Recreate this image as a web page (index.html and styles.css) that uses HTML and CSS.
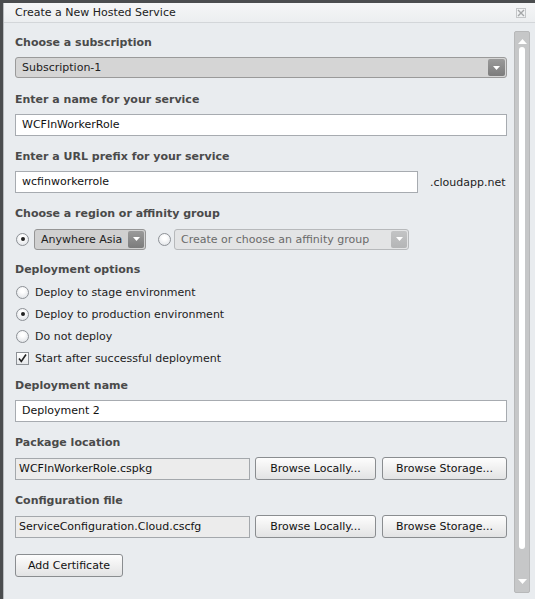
FILE: index.html
```html
<!DOCTYPE html>
<html>
<head>
<meta charset="utf-8">
<link rel="stylesheet" href="styles.css">
</head>
<body>
<div class="dialog">
  <div class="titlebar">
    <span class="title">Create a New Hosted Service</span>
    <svg class="close" width="10" height="10" viewBox="0 0 10 10">
      <rect x="0.5" y="0.5" width="9" height="9" fill="none" stroke="#c4c6c8"/>
      <path d="M2 2 L8 8 M8 2 L2 8" stroke="#a4a6a8" stroke-width="1.4"/>
    </svg>
  </div>
  <div class="content">
    <div class="form">
      <div class="label">Choose a subscription</div>
      <div class="select sub">
        <span class="sel-text">Subscription-1</span>
        <span class="dd"><svg width="7" height="4" viewBox="0 0 7 4"><path d="M0 0 H7 L3.5 4 Z" fill="#fff"/></svg></span>
      </div>

      <div class="label">Enter a name for your service</div>
      <div class="input">WCFInWorkerRole</div>

      <div class="label">Enter a URL prefix for your service</div>
      <div class="row url-row">
        <div class="input url">wcfinworkerrole</div>
        <span class="suffix">.cloudapp.net</span>
      </div>

      <div class="label">Choose a region or affinity group</div>
      <div class="row region-row">
        <span class="radio checked"></span>
        <div class="select region">
          <span class="sel-text">Anywhere Asia</span>
          <span class="dd"><svg width="7" height="4" viewBox="0 0 7 4"><path d="M0 0 H7 L3.5 4 Z" fill="#fff"/></svg></span>
        </div>
        <span class="radio second"></span>
        <div class="select affinity">
          <span class="sel-text">Create or choose an affinity group</span>
          <span class="dd"><svg width="7" height="4" viewBox="0 0 7 4"><path d="M0 0 H7 L3.5 4 Z" fill="#fff"/></svg></span>
        </div>
      </div>

      <div class="label">Deployment options</div>
      <div class="options">
        <div class="opt"><span class="radio"></span><span>Deploy to stage environment</span></div>
        <div class="opt"><span class="radio checked"></span><span>Deploy to production environment</span></div>
        <div class="opt"><span class="radio"></span><span>Do not deploy</span></div>
        <div class="opt"><span class="check"><svg width="11" height="11" viewBox="0 0 11 11"><path d="M2 5.5 L4.3 8.5 L9 1.5" fill="none" stroke="#222" stroke-width="1.6"/></svg></span><span>Start after successful deployment</span></div>
      </div>

      <div class="label">Deployment name</div>
      <div class="input">Deployment 2</div>

      <div class="label">Package location</div>
      <div class="row file-row first">
        <div class="input ro">WCFInWorkerRole.cspkg</div>
        <div class="btn local">Browse Locally...</div>
        <div class="btn storage">Browse Storage...</div>
      </div>

      <div class="label">Configuration file</div>
      <div class="row file-row">
        <div class="input ro">ServiceConfiguration.Cloud.cscfg</div>
        <div class="btn local">Browse Locally...</div>
        <div class="btn storage">Browse Storage...</div>
      </div>

      <div class="btn cert">Add Certificate</div>
    </div>
    <div class="scrollbar">
      <svg class="arrow" width="9" height="5" viewBox="0 0 9 5"><path d="M0 5 H9 L4.5 0 Z" fill="#fff"/></svg>
      <div class="thumb"></div>
      <div class="track-rest"></div>
      <svg class="arrow" width="9" height="5" viewBox="0 0 9 5"><path d="M0 0 H9 L4.5 5 Z" fill="#fff"/></svg>
    </div>
  </div>
</div>
</body>
</html>
```
FILE: styles.css
```css
* { box-sizing: border-box; }
html, body { margin: 0; padding: 0; }
body {
  background: #4b4d4f;
  width: 535px;
  height: 599px;
  overflow: hidden;
  font-family: "DejaVu Sans", Verdana, sans-serif;
  font-size: 11px;
  color: #222;
}
.dialog {
  margin: 3px 0 0 3px;
  width: 532px;
  height: 596px;
  background: #e9ecef;
  border-left: 1px solid #b9bcbf;
  display: flex;
  flex-direction: column;
}
.titlebar {
  height: 20px;
  flex: none;
  background: linear-gradient(#f5f6f7, #eceef0);
  border-bottom: 1px solid #d3d6d9;
  display: flex;
  align-items: center;
  justify-content: space-between;
  padding: 0 9px 0 11px;
}
.title { color: #222; font-size: 11px; }
.close { display: block; }
.content {
  flex: 1;
  display: flex;
  min-height: 0;
}
.form {
  width: 503px;
  padding: 12px 0 0 11px;
  display: flex;
  flex-direction: column;
}
.label {
  height: 16px;
  line-height: 16px;
  font-weight: bold;
  color: #4a4a4a;
  font-size: 11px;
  margin-bottom: 6px;
}
.row { display: flex; align-items: center; }
.input {
  height: 22px;
  line-height: 20px;
  background: #fff;
  border: 1px solid #a7abb0;
  padding-left: 6px;
  margin-bottom: 13px;
  color: #111;
}
.select {
  position: relative;
  height: 21px;
  line-height: 19px;
  background: #d5d5d5;
  border: 1px solid #9a9a9a;
  border-radius: 3px;
  display: flex;
  align-items: center;
  justify-content: space-between;
  padding: 0 1px 0 6px;
}
.select.sub { margin-bottom: 14px; }
.dd {
  width: 17px;
  height: 17px;
  border-radius: 2px;
  background: linear-gradient(#9a9a9a, #7c7c7c);
  display: flex;
  align-items: center;
  justify-content: center;
}
.dd svg { display: block; }
.url-row { margin-bottom: 13px; }
.url-row .input { margin-bottom: 0; }
.input.url { width: 403px; }
.suffix { margin-left: 12px; color: #222; }
.region-row { height: 22px; margin-bottom: 12px; }
.radio {
  width: 13px;
  height: 13px;
  border-radius: 50%;
  border: 1px solid #8d9196;
  background: radial-gradient(circle at 50% 35%, #ffffff 20%, #dfe2e6 90%);
  display: inline-flex;
  align-items: center;
  justify-content: center;
  flex: none;
  margin-left: 1px;
}
.radio.checked::after {
  content: "";
  width: 4px;
  height: 4px;
  border-radius: 50%;
  background: #222;
}
.select.region { width: 112px; margin-left: 5px; background: #d0d0d0; border-color: #959595; }
.select.region .dd { width: 16px; }
.radio.second { margin-left: 12px; }
.select.affinity {
  width: 235px;
  margin-left: 3px;
  background: #e3e4e5;
  border-color: #b7b9bb;
  color: #6a6a6a;
}
.select.affinity .dd { width: 16px; background: linear-gradient(#c3c4c5, #b4b5b6); }
.options { margin-top: -3px; margin-bottom: 9px; }
.opt { height: 22px; display: flex; align-items: center; }
.opt span:last-child { margin-left: 6px; }
.check {
  width: 13px;
  height: 13px;
  margin-left: 1px;
  border: 1px solid #8d9196;
  background: linear-gradient(#fff, #e6e8ea);
  display: inline-flex;
  align-items: center;
  justify-content: center;
}
.check svg { display: block; }
.file-row { margin-bottom: 16px; }
.file-row.first { margin-bottom: 13px; }
.file-row .input { margin-bottom: 0; }
.input.ro {
  width: 236px;
  background: #ececec;
  border-color: #a4a8ac;
  padding-left: 3px;
}
.btn {
  height: 23px;
  border: 1px solid #8a8d90;
  border-radius: 3px;
  background: linear-gradient(#fdfdfd, #f0f0f0 50%, #e2e3e4);
  display: flex;
  align-items: center;
  justify-content: center;
  color: #111;
  flex: none;
}
.btn.local { width: 121px; margin-left: 5px; }
.btn.storage { width: 125px; margin-left: 6px; }
.btn.cert { width: 108px; }
.scrollbar {
  margin: 8px 0 6px 7px;
  width: 16px;
  background: #c6c7c8;
  border: 1px solid #b7b8b9;
  border-radius: 2px;
  display: flex;
  flex-direction: column;
  align-items: center;
  padding: 7px 0 8px;
}
.arrow { display: block; flex: none; }
.thumb {
  width: 6px;
  height: 502px;
  margin-top: 3px;
  background: #fff;
  border-radius: 3px;
  flex: none;
}
.track-rest { flex: 1; }
```
